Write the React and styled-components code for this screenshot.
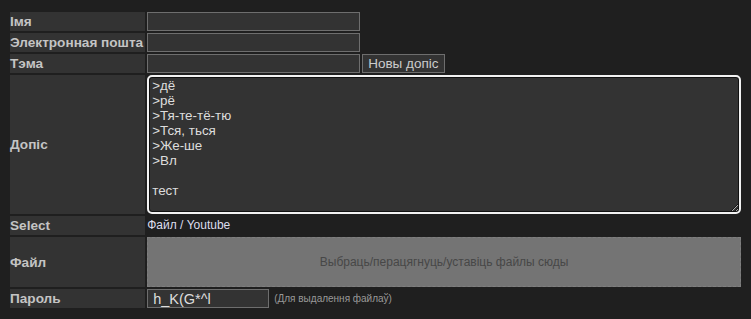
import React, { useState } from 'react';
import styled, { createGlobalStyle } from 'styled-components';

const GlobalStyle = createGlobalStyle`
	body {
		margin: 0;
		padding: 10px 8px 0;
		background: #1f1f1f;
		font-family: "Liberation Sans", Arial, sans-serif;
		color: #ddd;
	}
`;

const Table = styled.table`
	width: 100%;
	border-spacing: 2px;
	border-collapse: separate;
`;

const LabelCell = styled.td`
	width: 1px;
	padding: 0 2px 0 0;
	background: #333;
	color: #c4c4c4;
	font-weight: bold;
	font-size: 13.6px;
	white-space: nowrap;
	vertical-align: middle;
`;

const FieldCell = styled.td`
	padding: 0;
	font-size: 12px;
	vertical-align: middle;
	line-height: 0;
`;

const TextInput = styled.input`
	box-sizing: border-box;
	width: ${(p) => p.$width || 213}px;
	height: 19px;
	margin: 0;
	padding: 0 5px;
	background: #333;
	border: 1px solid #6e6e6e;
	color: #ddd;
	font-family: "Liberation Sans", Arial, sans-serif;
	font-size: ${(p) => p.$size || 13}px;
	vertical-align: middle;
	outline: none;
`;

const Button = styled.button`
	box-sizing: border-box;
	height: 19px;
	margin: 0 0 0 2px;
	padding: 0 5px;
	background: #333;
	border: 1px solid #6e6e6e;
	color: #ccc;
	font-family: "Liberation Sans", Arial, sans-serif;
	font-size: 13.5px;
	vertical-align: middle;
`;

const TextArea = styled.textarea`
	display: block;
	box-sizing: border-box;
	width: 100%;
	height: 139px;
	margin: 0;
	padding: 1px 3px;
	background: #333;
	color: #ddd;
	border: 2px solid #f2f2f2;
	border-radius: 5px;
	box-shadow: inset 0 0 0 1px #111;
	font-family: "Liberation Sans", Arial, sans-serif;
	font-size: 13.4px;
	line-height: 15px;
	outline: none;
	resize: vertical;
`;

const Links = styled.span`
	display: block;
	line-height: 19px;
	color: #dde;
	font-size: 12px;
`;

const DropZone = styled.div`
	display: flex;
	align-items: center;
	justify-content: center;
	box-sizing: border-box;
	height: 50px;
	background: #747474;
	border: 1px dashed #7f7f7f;
	color: #474747;
	font-size: 12px;
	line-height: 1;
`;

const Hint = styled.span`
	margin-left: 5px;
	color: #999;
	font-size: 10px;
	vertical-align: middle;
`;

const initialText = '>дё\n>рё\n>Тя-те-тё-тю\n>Тся, ться\n>Же-ше\n>Вл\n\nтест';

export default function App() {
	const [text, setText] = useState(initialText);
	const [password, setPassword] = useState('h_K(G*^l');

	return (
		<>
			<GlobalStyle />
			<form onSubmit={(e) => e.preventDefault()}>
				<Table>
					<tbody>
						<tr>
							<LabelCell>Імя</LabelCell>
							<FieldCell><TextInput type="text" /></FieldCell>
						</tr>
						<tr>
							<LabelCell>Электронная пошта</LabelCell>
							<FieldCell><TextInput type="text" /></FieldCell>
						</tr>
						<tr>
							<LabelCell>Тэма</LabelCell>
							<FieldCell>
								<TextInput type="text" />
								<Button type="submit">Новы допіс</Button>
							</FieldCell>
						</tr>
						<tr>
							<LabelCell>Допіс</LabelCell>
							<FieldCell>
								<TextArea value={text} onChange={(e) => setText(e.target.value)} />
							</FieldCell>
						</tr>
						<tr>
							<LabelCell>Select</LabelCell>
							<FieldCell><Links>Файл / Youtube</Links></FieldCell>
						</tr>
						<tr>
							<LabelCell>Файл</LabelCell>
							<FieldCell>
								<DropZone>Выбраць/перацягнуць/уставіць файлы сюды</DropZone>
							</FieldCell>
						</tr>
						<tr>
							<LabelCell>Пароль</LabelCell>
							<FieldCell>
								<TextInput
									type="text"
									$width={122}
									$size={14.5}
									value={password}
									onChange={(e) => setPassword(e.target.value)}
								/>
								<Hint>(Для выдалення файлаў)</Hint>
							</FieldCell>
						</tr>
					</tbody>
				</Table>
			</form>
		</>
	);
}
